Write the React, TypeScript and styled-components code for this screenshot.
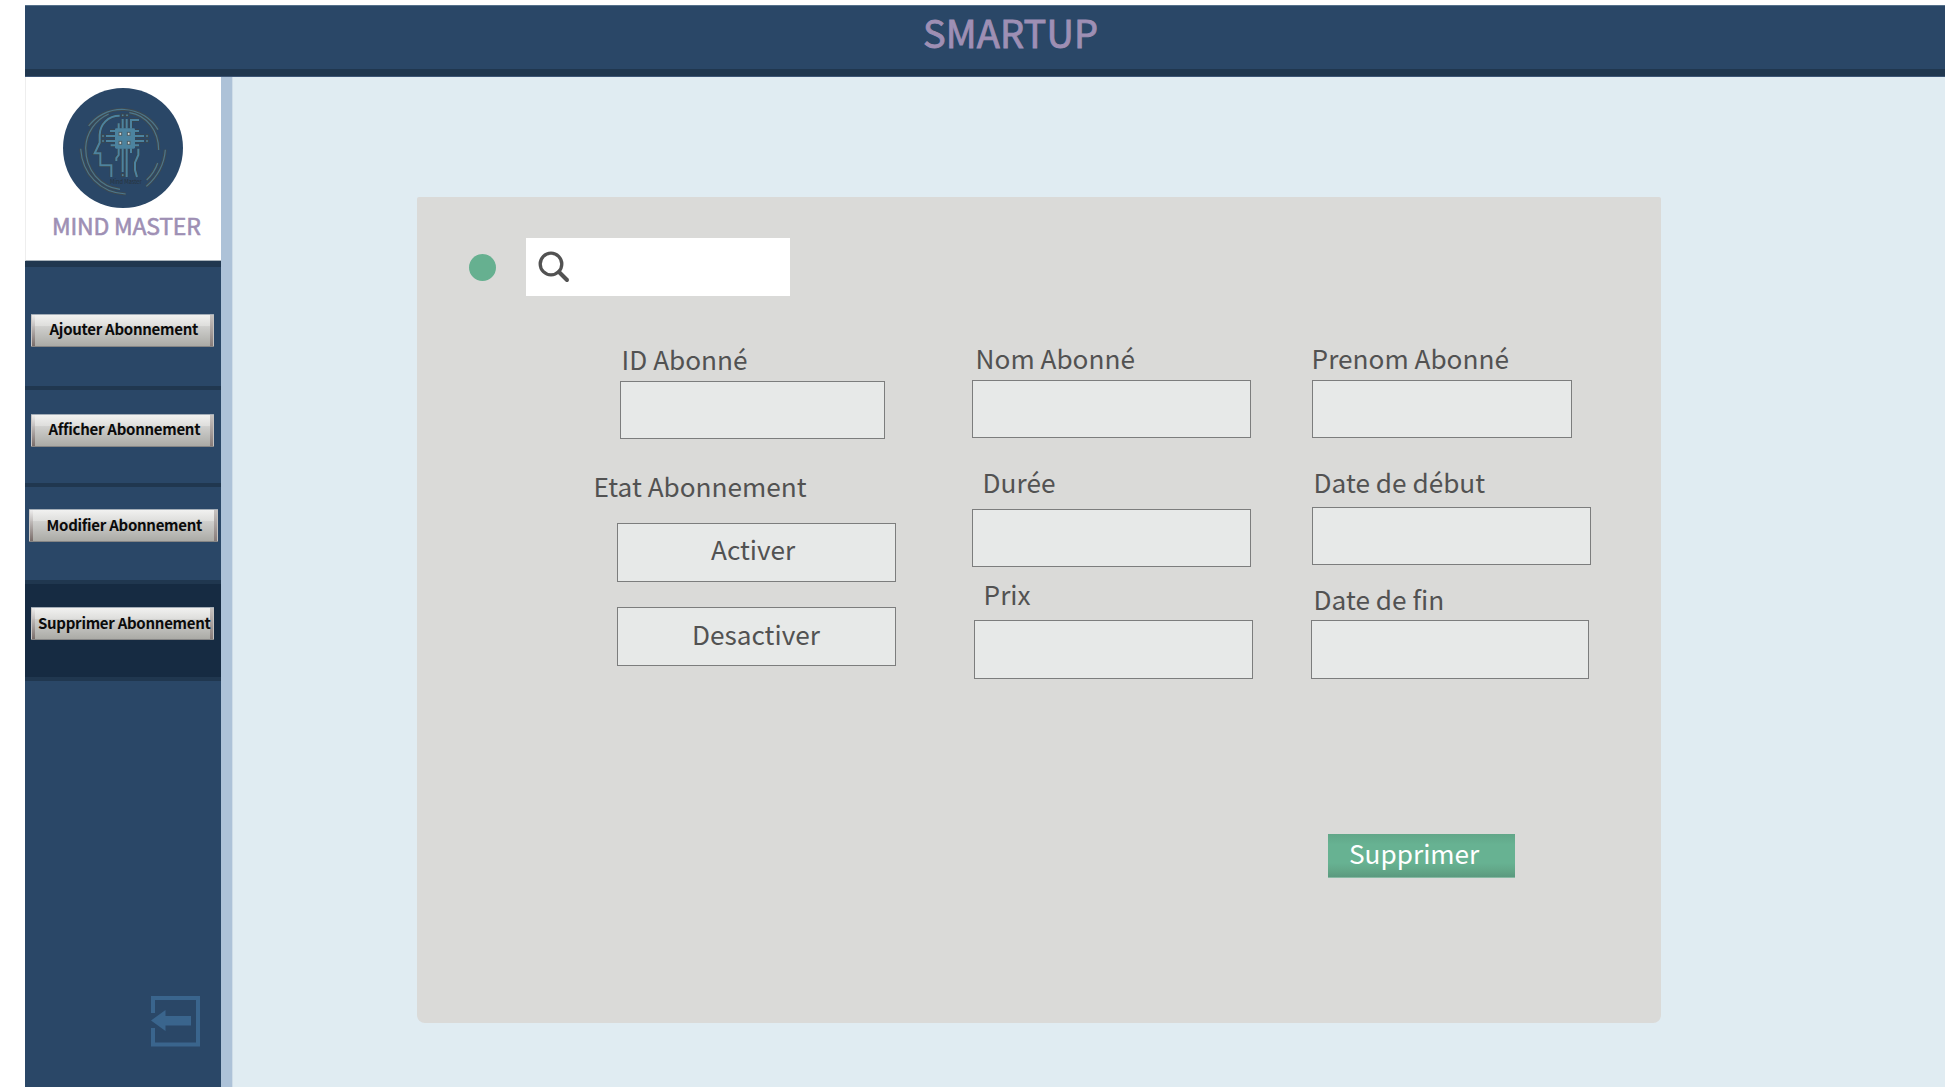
import React from "react";
import styled, { createGlobalStyle } from "styled-components";

const Global = createGlobalStyle`
  * { box-sizing: border-box; }
  body { margin: 0; background: #fff; overflow: hidden; }
  body, button, input { font-family: "Noto Sans CJK SC", "Noto Sans", sans-serif; }
`;

const Page = styled.div`
  width: 1945px;
  height: 1087px;
  padding: 5px 0 0 25px;
  display: flex;
  flex-direction: column;
  background: #fff;
`;

const Header = styled.header`
  height: 72px;
  flex: none;
  background: #2a4767;
  border-top: 1px solid #54708a;
  border-bottom: 1px solid #3d5676;
  box-shadow: inset 0 -7px 0 #20374f;
  padding-left: 898px;
`;

const Title = styled.h1`
  margin: 0;
  font-size: 38px;
  font-weight: 400;
  line-height: 51px;
  letter-spacing: 0.1px;
  -webkit-text-stroke: 0.9px #9e8fb4;
  color: #9e8fb4;
  white-space: nowrap;
`;

const Body = styled.div`
  flex: 1;
  display: flex;
  min-height: 0;
`;

const Sidebar = styled.nav`
  width: 207px;
  flex: none;
  display: flex;
  flex-direction: column;
  background: #2a4767;
  border-right: 11px solid #adc2d8;
`;

const Brand = styled.div`
  height: 184px;
  flex: none;
  display: flex;
  flex-direction: column;
  background: #fff;
  border-left: 1px solid #eeeeee;
  border-bottom: 1px solid #a9b3bb;
  padding: 11px 0 0 37px;
`;

const BrandName = styled.div`
  margin: 0 0 0 -11px;
  font-size: 23px;
  font-weight: 400;
  line-height: 34px;
  letter-spacing: -0.2px;
  -webkit-text-stroke: 0.6px #9e8fb4;
  color: #9e8fb4;
  white-space: nowrap;
`;

const NavItem = styled.div<{ $h: number; $top: number; $active?: boolean; $left?: number; $line?: number }>`
  height: ${(p) => p.$h}px;
  flex: none;
  border-top: ${(p) => p.$line ?? 4}px solid #20374f;
  background: ${(p) => (p.$active ? "#162b42" : "transparent")};
  padding: ${(p) => p.$top}px 0 0 ${(p) => p.$left ?? 6}px;
`;

const NavButton = styled.button<{ $w: number; $indent: number; $drop?: number }>`
  display: block;
  width: ${(p) => p.$w}px;
  height: 33px;
  margin: 0;
  padding: ${(p) => p.$drop ?? 0}px 0 ${(p) => 4 - (p.$drop ?? 0)}px ${(p) => p.$indent}px;
  border: 0;
  text-align: left;
  white-space: nowrap;
  font-size: 15px;
  font-weight: 700;
  line-height: 29px;
  letter-spacing: -0.28px;
  color: #0b0b0b;
  background:
    linear-gradient(#a3adb7, #a3adb7) top / 100% 1px no-repeat,
    linear-gradient(#858585, #858585) bottom / 100% 1px no-repeat,
    linear-gradient(90deg, #c8c5c3 0, #c8c5c3 1px, transparent 1px) left / 5px 100% no-repeat,
    linear-gradient(rgba(240, 240, 240, 0.7), rgba(110, 95, 92, 0.85)) left / 4px 100% no-repeat,
    linear-gradient(90deg, transparent 2px, #c4c2c0 2px) right / 3px 100% no-repeat,
    linear-gradient(#c9c5c3, #857a78) right / 4px 100% no-repeat,
    linear-gradient(#f3f3f2 0, #dededc 36%, #cfcfcd 38%, #a9a9a4 100%);
`;

const Spacer = styled.div`
  flex: 1;
  border-top: 4px solid #20374f;
`;

const Exit = styled.button`
  width: 50px;
  height: 51px;
  flex: none;
  margin: 0 0 40px 126px;
  padding: 0;
  border: 0;
  background: none;
  svg { display: block; }
`;

const Main = styled.main`
  flex: 1;
  background: #e0ecf2;
  border-left: 1px solid #cfdde8;
  padding: 120px 0 0 184px;
`;

const Panel = styled.section`
  width: 1244px;
  height: 826px;
  background: #dadad8;
  border-radius: 2px 2px 8px 8px;
  padding-top: 41px;
  display: flex;
  flex-direction: column;
  align-items: flex-start;
`;

const SearchRow = styled.div`
  display: flex;
  align-items: center;
  gap: 30.5px;
  padding-left: 51.5px;
`;

const Dot = styled.span`
  width: 27px;
  height: 27px;
  border-radius: 50%;
  background: #66b090;
`;

const SearchBox = styled.div`
  width: 264px;
  height: 58px;
  background: #fff;
  padding: 12px;
  svg { display: block; }
`;

const Form = styled.div`
  margin: 46px 0 0 175px;
  height: 338px;
  display: grid;
  grid-template-columns: 380px 338px 300px;
`;

const Column = styled.div`
  display: flex;
  flex-direction: column;
  align-items: flex-start;
`;

const Label = styled.label<{ $top: number; $indent?: number }>`
  margin: ${(p) => p.$top}px 0 0 ${(p) => p.$indent ?? 0}px;
  padding: 1px 0 0 1.6px;
  font-size: 26.2px;
  line-height: 30px;
  height: 30px;
  color: #525252;
  white-space: nowrap;
`;

const field = `
  display: block;
  padding: 0;
  border: 1px solid #7c7d7d;
  border-radius: 0;
  background: #e7e9e8;
  outline: none;
`;

const Input = styled.input<{ $top: number; $left?: number; $w?: number; $h?: number }>`
  ${field}
  margin: ${(p) => p.$top}px 0 0 ${(p) => p.$left ?? 0}px;
  width: ${(p) => p.$w ?? 279}px;
  height: ${(p) => p.$h ?? 58}px;
`;

const StateButton = styled.button<{ $top: number; $lh: number; $indent: number }>`
  ${field}
  margin: ${(p) => p.$top}px 0 0 25px;
  width: 279px;
  height: 59px;
  padding: 0 0 ${(p) => 57 - p.$lh}px ${(p) => p.$indent}px;
  text-align: left;
  font-size: 26.2px;
  line-height: ${(p) => p.$lh}px;
  color: #525252;
`;

const Submit = styled.button`
  width: 187px;
  height: 44px;
  margin: 154px 0 0 911px;
  padding: 0 0 6px 21px;
  border: 0;
  text-align: left;
  font-size: 26.2px;
  line-height: 37px;
  color: #fff;
  background: linear-gradient(#61a688 0, #67b292 24%, #67b292 66%, #61a486 86%, #5b9a7f 97%, #87b9a3 98%);
`;

const Logo = () => (
  <svg width="120" height="120" viewBox="39 24 360 360" fill="none">
    <circle cx="219" cy="204" r="180" fill="#2a4767" />
    {[
      { c: "#3f4a50", w: 9 },
      { c: "#4b778d", w: 3.5 },
    ].map((s) => (
      <g key={s.c} stroke={s.c} strokeWidth={s.w}>
        <path d="M116 138A126 126 0 0 1 324 149" />
        <path d="M176 102A116 116 0 0 0 107 204C107 270 150 321 210 328" />
        <path d="M238 98C291 106 326 153 326 210" />
        <path d="M92 206C97 282 151 339 227 342" />
        <path d="M346 209C343 252 321 291 289 319" />
        <path d="M323 249C316 270 305 286 290 300" />
      </g>
    ))}
    {[
      { c: "#3a464d", w: 10 },
      { c: "#4c839f", w: 6 },
    ].map((s) => (
      <g key={s.c} stroke={s.c} strokeWidth={s.w}>
        <path d="M209 107C174 107 150 133 149 165V188L134 220H151V256H184V291" />
        <path d="M218 117V146M230 117V146M243 146V120H267M206 148V130" />
        <path d="M218 205V276M230 205V291M206 205V225L199 234V243M243 205V219M265 206V225L255 248V270L261 291" />
        <path d="M168 168H196M168 183H196M180 153H196M182 196H196M252 168H282M252 183H282M252 153H267M252 196H267" />
      </g>
    ))}
    <rect x="195" y="145" width="60" height="61" rx="4" fill="#4c839f" />
    <g fill="#d8d8d2" stroke="#4e5f66" strokeWidth="3">
      <rect x="207" y="157" width="8" height="9" />
      <rect x="232" y="157" width="8" height="9" />
      <rect x="207" y="184" width="8" height="9" />
      <rect x="232" y="184" width="8" height="9" />
    </g>
    <g fill="#4c839f" stroke="#3a464d" strokeWidth="3">
      <rect x="214" y="102" width="8" height="8" />
      <rect x="227" y="102" width="8" height="8" />
      <rect x="155" y="164" width="8" height="8" />
      <rect x="155" y="179" width="8" height="8" />
      <rect x="287" y="164" width="8" height="8" />
      <rect x="287" y="179" width="8" height="8" />
      <rect x="214" y="281" width="8" height="9" />
    </g>
    <text x="180" y="312" fontSize="17" fill="#28333d" textLength="95" fontFamily="Noto Sans CJK SC, sans-serif">
      Mind Master
    </text>
  </svg>
);

const SearchIcon = () => (
  <svg width="34" height="34" viewBox="0 0 34 34" fill="none" stroke="#525252">
    <circle cx="13" cy="14" r="10.8" strokeWidth="3.3" />
    <path d="M21 22L29 30" strokeWidth="4" strokeLinecap="round" />
  </svg>
);

const ExitIcon = () => (
  <svg width="50" height="51" viewBox="0 0 50 51">
    <path d="M2 17V2H47V48.5H2V32" fill="none" stroke="#3a658d" strokeWidth="4" />
    <path d="M0 24.500L14.500 14V20H40V29.500H14.500V35Z" fill="#3a658d" />
  </svg>
);

export default function App() {
  return (
    <Page>
      <Global />
      <Header>
        <Title>SMARTUP</Title>
      </Header>
      <Body>
        <Sidebar>
          <Brand>
            <Logo />
            <BrandName>MIND MASTER</BrandName>
          </Brand>
          <NavItem $h={125} $top={47} $line={6}>
            <NavButton $w={183} $indent={18.5}>Ajouter Abonnement</NavButton>
          </NavItem>
          <NavItem $h={97} $top={24}>
            <NavButton $w={183} $indent={17.5}>Afficher Abonnement</NavButton>
          </NavItem>
          <NavItem $h={97} $top={22} $left={4}>
            <NavButton $w={189} $indent={17.5} $drop={1}>Modifier Abonnement</NavButton>
          </NavItem>
          <NavItem $h={97} $top={23} $active>
            <NavButton $w={183} $indent={7} $drop={1}>Supprimer Abonnement</NavButton>
          </NavItem>
          <Spacer />
          <Exit aria-label="Sortir">
            <ExitIcon />
          </Exit>
        </Sidebar>
        <Main>
          <Panel>
            <SearchRow>
              <Dot />
              <SearchBox>
                <SearchIcon />
              </SearchBox>
            </SearchRow>
            <Form>
              <Column>
                <Label $top={1} $indent={28}>ID Abonné</Label>
                <Input $top={8} $left={28} $w={265} />
                <Label $top={31}>Etat Abonnement</Label>
                <StateButton $top={23} $lh={51} $indent={93}>Activer</StateButton>
                <StateButton $top={25} $lh={53} $indent={74}>Desactiver</StateButton>
              </Column>
              <Column>
                <Label $top={0} $indent={2}>Nom Abonné</Label>
                <Input $top={8} />
                <Label $top={28} $indent={9}>Durée</Label>
                <Input $top={13} />
                <Label $top={11} $indent={10}>Prix</Label>
                <Input $top={12} $left={2} $h={59} />
              </Column>
              <Column>
                <Label $top={0}>Prenom Abonné</Label>
                <Input $top={8} $left={2} $w={260} />
                <Label $top={28} $indent={2}>Date de début</Label>
                <Input $top={11} $left={2} />
                <Label $top={18} $indent={2}>Date de fin</Label>
                <Input $top={7} $left={1} $w={278} $h={59} />
              </Column>
            </Form>
            <Submit>Supprimer</Submit>
          </Panel>
        </Main>
      </Body>
    </Page>
  );
}
